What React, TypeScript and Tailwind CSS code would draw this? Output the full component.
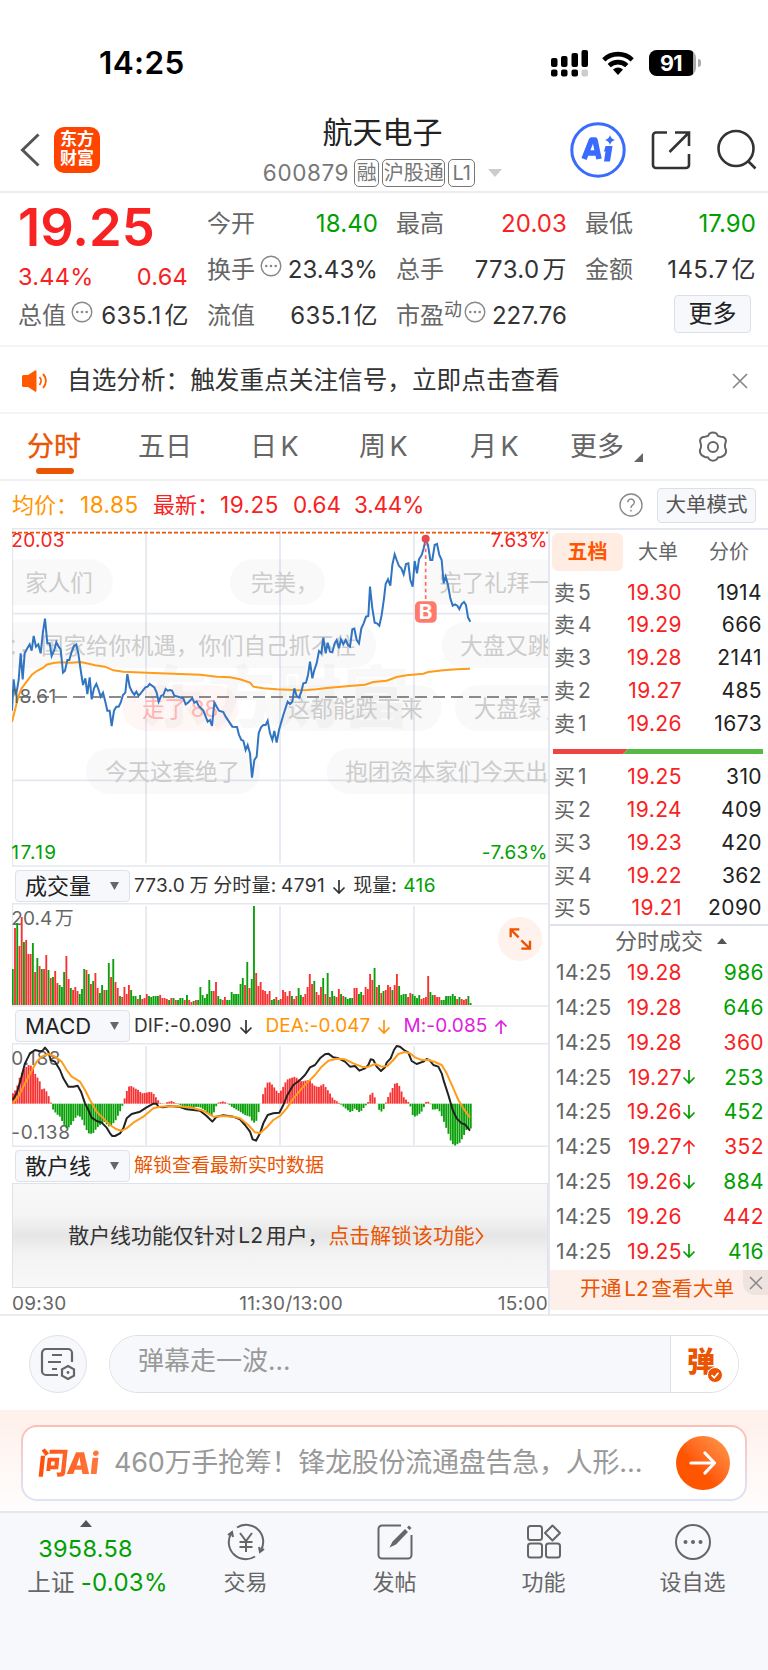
import React from 'react';
import { clsx } from 'clsx';

type Point = [number, number];

const parse = (s: string): Point[] =>
  s.trim().split(/\s+/).map((p) => p.split(',').map(Number) as Point);

// the second part of every series is stored relative to its own origin
const series = (first: string, second: string): Point[] => [
  ...parse(first),
  ...parse(second).map(([x, y]): Point => [x + 810, y]),
];

const toPoints = (pts: Point[]) => pts.map((p) => p.join(',')).join(' ');

const STEP = 6.7;
const GRID_X = [438, 840, 1242];

const PRICE = series(
  `36,572 41,478 46,520 51,510 56,480 62,400 68,478 74,400 82,385 89,373 95,392 101,348 108,380 115,373 122,400 129,335 135,296
  142,370 149,370 155,408 163,390 169,366 176,380 182,388 189,458 195,452 202,420 208,420 215,395 222,378 229,373 235,400 242,450
  249,495 256,475 262,522 269,472 275,538 282,505 289,492 296,510 302,530 309,518 316,545 322,572 329,572 335,618 342,572 349,560
  356,560 362,548 369,525 376,518 382,462 389,500 396,515 403,524 409,515 416,527 422,520 436,502 443,500 449,492 463,502 470,518
  476,545 483,528 490,525 497,507 503,512 510,510 516,512 523,527 537,531 550,535 557,553 564,548 577,535 583,548 590,545 596,558
  610,572 623,605 630,600 636,618 643,548 650,560 657,572 670,576 677,590 697,620 711,621 717,645 724,660 730,662 737,690 743,675
  750,700 756,773 763,720 770,710 776,640 783,622 790,615 797,615 803,602 810,640 817,660 823,633 830,668 837,630 850,585 863,545
  870,552 877,545`,
  `73,505 80,528 87,533 94,515 100,490 108,488 114,465 120,425 127,475 133,450 140,430 147,393 154,400 160,353 167,400 173,368
  180,395 187,397 194,370 200,360 207,385 213,358 220,373 227,360 234,375 240,380 247,328 253,326 260,360 267,370 274,325 281,310
  288,290 295,288 300,200 307,265 314,308 321,310 328,317 335,285 342,235 347,192 354,178 361,197 367,135 374,103 380,120 387,138
  394,145 401,163 408,132 415,130 421,180 428,200 434,123 441,160 447,118 455,105 461,85 467,58 474,75 481,120 487,120 494,75
  501,72 508,105 515,120 521,190 527,170 534,195 541,235 548,257 555,253 562,257 568,267 575,252 582,246 588,255 594,292 601,305`,
);

const AVERAGE = series(
  `36,605 45,570 55,530 65,505 80,485 95,465 110,453 130,443 140,434 160,429 180,427 215,428 240,426 260,430 285,436 315,440
  340,451 370,455 440,458 520,461 600,464 650,470 690,472 720,478 750,488 760,500 790,505 830,508 880,510`,
  `80,511 110,510 140,508 170,504 230,499 285,494 310,486 350,482 380,471 410,466 460,461 475,456 520,451 560,448 600,446`,
);

const DIF = series(
  `38,720 50,700 62,660 75,610 90,580 105,570 120,574 128,572 135,563 145,575 152,600 165,605 180,630 190,655 205,680 220,680
  233,677 243,695 255,730 265,750 275,773 290,783 305,788 320,803 330,820 337,828 345,828 360,820 370,805 380,775 395,762 420,755
  440,742 460,731 470,731 475,740 490,742 510,738 535,740 560,748 600,752 620,768 637,785 650,770 670,766 700,770 720,778 735,795
  750,815 758,838 768,842 780,820 790,790 803,765 820,760 838,758 850,735 862,705 880,675`,
  `90,660 105,645 120,622 135,615 150,595 165,583 175,581 190,592 205,595 225,605 240,620 255,618 268,632 285,625 295,615 302,598
  310,600 320,620 333,633 345,622 350,608 362,595 372,570 380,558 390,560 402,570 415,578 425,603 440,612 460,605 470,597 480,602
  490,615 505,620 515,640 522,665 535,705 548,750 560,775 575,790 585,793 600,812`,
);

const DEA = series(
  `38,730 55,710 75,670 95,632 110,605 125,590 145,582 165,590 185,605 200,630 215,650 240,665 255,690 270,720 290,755 310,775
  330,795 350,808 365,812 380,805 400,788 430,770 460,745 480,740 520,738 570,742 610,752 640,770 670,768 700,770 720,775 745,795
  765,817 780,820 800,802 820,780 840,768 860,745 880,715`,
  `90,692 100,680 115,665 135,645 155,620 175,602 200,596 225,598 250,610 275,620 290,622 315,612 335,620 352,618 370,600 385,582
  405,576 420,580 435,592 455,600 475,600 495,606 515,615 530,640 550,685 565,720 580,745 600,773`,
);

const HISTOGRAM = series(
  `40,700 50,685 60,650 70,630 85,615 97,618 105,640 120,665 125,688 135,685 145,705 152,725 160,750 170,762 180,770 190,790
  200,805 210,800 225,775 235,765 245,775 255,800 265,820 278,822 290,805 300,795 315,785 325,800 335,795 345,785 355,765 365,745
  372,722 380,695 385,680 395,678 405,685 415,690 425,700 440,698 452,695 460,700 470,715 480,728 490,733 500,727 515,723 525,728
  540,735 560,745 575,745 590,740 600,742 615,750 625,765 640,765 645,745 655,728 670,724 685,731 695,740 720,755 735,765 750,770
  760,790 770,782 775,760 782,735 787,710 795,685 805,663 815,672 825,685 835,700 845,690 860,660`,
  `55,657 75,650 85,657 95,665 105,662 120,660 130,675 145,682 160,672 170,685 180,700 190,718 203,725 215,735 230,748 243,758
  255,745 270,758 280,745 290,733 297,722 303,695 310,700 318,722 328,750 335,755 343,745 350,720 360,700 370,680 378,665 390,680
  400,710 415,726 422,740 430,772 445,765 455,755 465,735 470,722 480,728 490,752 500,745 510,755 520,780 535,820 545,850 555,857
  570,848 580,830 590,808 606,805`,
);

// height + direction for each minute
const VOLUME = `36g 77r 82g 59r 88r 63g 65r 51r 51r 62g 33r 47g 39r 36g 36r 50r 35g 27r 28g 34r 22r 20g 18g 33g 49r 26r 17g 15r 18r 14r
11g 16g 36g 35r 31g 21r 24g 32r 17r 12g 20g 15r 15g 42g 28r 46g 23r 17r 9g 8r 18r 11r 20r 15g 9g 9g 6r 10g 6r 7r
11r 9g 8g 9g 9g 9g 10r 7r 7r 6r 5g 7r 7g 5r 5g 7g 7g 5r 10g 5r 3r 4g 5r 5g 18g 10g 7g 11g 25g 14g
14r 23r 9g 6g 5r 8r 5g 5g 13g 11g 11g 11g 21g 27g 20r 43g 17r 26g 99g 32r 19r 23r 15r 14r 11r 14r 5g 6g 8r 5g
6r 15r 13r 9r 14r 9g 6r 9r 17g 10g 8r 11r 18r 31r 21r 24g 13r 10r 18r 27g 11r 32g 8r 14g 9g 8r 16r 11g 9r 8g
6g 7g 7g 17r 17r 11g 13g 10r 18r 16r 31r 25r 37g 18r 20g 12r 14g 15r 20r 18r 15g 20r 31r 19g 10g 11g 11g 8r 12r 11g
9g 7g 10g 6r 7r 8r 29r 13g 10g 10r 8r 8r 5g 5g 9g 9g 9g 11g 9g 6r 8g 6r 5r 6r 9g 2g`.split(/\s+/);

const valueAt = (pts: Point[], x: number) => {
  const i = pts.findIndex((p) => p[0] >= x);
  if (i === 0) return pts[0][1];
  if (i < 0) return pts[pts.length - 1][1];
  const [x0, y0] = pts[i - 1];
  const [x1, y1] = pts[i];
  return y0 + ((y1 - y0) * (x - x0)) / (x1 - x0);
};

const asks = [['卖 5', '19.30', '1914'], ['卖 4', '19.29', '666'], ['卖 3', '19.28', '2141'], ['卖 2', '19.27', '485'], ['卖 1', '19.26', '1673']];
const bids = [['买 1', '19.25', '310'], ['买 2', '19.24', '409'], ['买 3', '19.23', '420'], ['买 4', '19.22', '362'], ['买 5', '19.21', '2090']];

const trades = [
  { price: '19.28', dir: '', qty: '986', up: false },
  { price: '19.28', dir: '', qty: '646', up: false },
  { price: '19.28', dir: '', qty: '360', up: true },
  { price: '19.27', dir: 'down', qty: '253', up: false },
  { price: '19.26', dir: 'down', qty: '452', up: false },
  { price: '19.27', dir: 'up', qty: '352', up: true },
  { price: '19.26', dir: 'down', qty: '884', up: false },
  { price: '19.26', dir: '', qty: '442', up: true },
  { price: '19.25', dir: 'down', qty: '416', up: false },
];

const bullets = [
  { x: -20, w: 359, y: 118, tx: 76, text: '家人们' },
  { x: 690, w: 285, y: 118, tx: 753, text: '完美，' },
  { x: 1262, w: 500, y: 118, tx: 1318, text: '完了礼拜一' },
  { x: -20, w: 1149, y: 307, tx: 22, text: '：，国家给你机遇，你们自己抓不住' },
  { x: 1325, w: 500, y: 307, tx: 1381, text: '大盘又跳' },
  { x: 795, w: 530, y: 496, tx: 863, text: '这都能跌下来' },
  { x: 1365, w: 500, y: 496, tx: 1421, text: '大盘绿了' },
  { x: 258, w: 523, y: 685, tx: 315, text: '今天这套绝了' },
  { x: 980, w: 900, y: 685, tx: 1036, text: '抱团资本家们今天出' },
];

const Arrow = ({ up = false, className = '' }) => (
  <svg viewBox="0 0 14 16" className={clsx('h-4 w-3.5 shrink-0', up && 'rotate-180', className)} fill="none" stroke="currentColor" strokeWidth="1.7">
    <path d="M7 1v13M1.5 8.5 7 14l5.5-5.5" />
  </svg>
);

const Dots = () => (
  <svg viewBox="0 0 22 22" className="h-[22px] w-[22px] shrink-0" fill="none" stroke="#888" strokeWidth="1.4">
    <circle cx="11" cy="11" r="9.8" />
    <g fill="#888" stroke="none">
      <circle cx="6.3" cy="11" r="1.3" />
      <circle cx="11" cy="11" r="1.3" />
      <circle cx="15.7" cy="11" r="1.3" />
    </g>
  </svg>
);

const StatusBar = () => (
  <div className="flex h-[100px] items-center justify-between pt-[26px] pr-[67px] pl-[99px]">
    <span className="text-[31.5px] font-semibold tracking-[0.4px] text-black">14:25</span>
    <div className="flex items-center">
      <svg viewBox="0 0 38 27" className="h-[27px] w-[38px]">
        <rect x="0" y="8" width="6.5" height="9" rx="2" />
        <rect x="10" y="6" width="6.5" height="11" rx="2" />
        <rect x="20.5" y="3" width="6.5" height="14" rx="2" />
        <rect x="30.5" y="0" width="6.5" height="17" rx="2" />
        <rect x="0" y="19.5" width="6.5" height="7" rx="2" />
        <rect x="10" y="19.5" width="6.5" height="7" rx="2" />
        <rect x="20.5" y="19.5" width="6.5" height="7" rx="2" />
        <rect x="30.5" y="19.5" width="6.5" height="7" rx="2" fill="#ccc" />
      </svg>
      <svg viewBox="0 0 32 24" className="ml-[13px] h-6 w-8" fill="none" stroke="#000" strokeWidth="4.6">
        <path d="M1.8 8.8a20.5 20.5 0 0 1 28.4 0" />
        <path d="M7.2 14.6a13 13 0 0 1 17.6 0" />
        <path d="M11 18.5a8 8 0 0 1 10 0L16 24z" fill="#000" stroke="none" />
      </svg>
      <div className="ml-[15px] flex h-[26px] w-[47px] items-center overflow-hidden rounded-lg bg-[#aaa]">
        <span className="flex h-full w-[44px] items-center justify-center bg-black text-[21.5px] font-bold tracking-tight text-white">91</span>
      </div>
      <div className="ml-0.5 h-2 w-[3px] rounded-r-full bg-[#aaa]" />
    </div>
  </div>
);

const Header = () => (
  <div className="flex h-[93px] items-center border-b-2 border-[#ededed] pt-2 pl-5">
    <svg viewBox="0 0 20 34" className="h-[34px] w-5" fill="none" stroke="#555" strokeWidth="3">
      <path d="M18.5 1.5 2.5 17l16 15.5" />
    </svg>
    <div className="ml-3.5 flex h-[46px] w-[46px] flex-col items-center justify-center rounded-[10px] bg-[#ff4400] pb-0.5 text-[17px] leading-[19px] font-bold text-white">
      <span>东方</span>
      <span>财富</span>
    </div>
    <div className="ml-[162px] flex w-[241px] flex-col items-center">
      <span className="h-[47px] text-[30px] leading-[41px] text-[#222]">航天电子</span>
      <div className="flex h-7 items-center gap-[3px] text-xl text-[#777]">
        <span className="mr-0.5 text-[22.5px] tracking-[0.6px]">600879</span>
        <span className="flex h-7 w-[25px] items-center justify-center rounded-[5px] border-[1.5px] border-[#777]">融</span>
        <span className="flex h-7 w-[63px] items-center justify-center rounded-[5px] border-[1.5px] border-[#777]">沪股通</span>
        <span className="flex h-7 w-[27px] items-center justify-center rounded-[5px] border-[1.5px] border-[#777]">L1</span>
        <svg viewBox="0 0 14 8" className="ml-2.5 h-2 w-3.5" fill="#ccc"><path d="M0 0h14L7 8z" /></svg>
      </div>
    </div>
    <svg viewBox="0 0 56 56" className="ml-[67px] h-14 w-14 shrink-0">
      <circle cx="28" cy="28" r="26.2" fill="#fff" stroke="#3a6bff" strokeWidth="3" />
      <path d="M14 37 21.500 18h3.500l4 19M16 31h11" fill="none" stroke="#3a6bff" strokeWidth="5.500" strokeLinejoin="round" />
      <path d="M35.500 24h7l-2.500 15.500h-6l1.500-10h-1.500z" fill="#3a6bff" />
      <path d="M40 13q1 4 5 5-4 1-5 5-1-4-5-5 4-1 5-5z" fill="#3a6bff" />
    </svg>
    <svg viewBox="0 0 40 40" className="ml-[25px] h-10 w-10 shrink-0" fill="none" stroke="#333" strokeWidth="2.6">
      <path d="M16 2.5H5a3 3 0 0 0-3 3V35a3 3 0 0 0 3 3h30a3 3 0 0 0 3-3V24" />
      <path d="M24 2.5h14V16M37 3.5 18.5 22" />
    </svg>
    <svg viewBox="0 0 42 42" className="ml-[25px] h-[42px] w-[42px] shrink-0" fill="none" stroke="#333" strokeWidth="2.6">
      <circle cx="20" cy="19.5" r="17.5" />
      <path d="m32 32 7.5 7.5" />
    </svg>
  </div>
);

type QuoteProps = { label: string; value: string; unit?: string; tone?: string; extra?: React.ReactNode };

const Quote = ({ label, value, unit, tone = 'text-[#333]', extra }: QuoteProps) => (
  <div className="flex h-[46px] items-center justify-between">
    <div className="flex items-center text-2xl whitespace-nowrap text-[#666]">
      {label}
      {extra}
    </div>
    <span className={clsx('-mr-px text-[24px] whitespace-nowrap', unit ? 'tracking-[0.4px]' : 'tracking-[0.1px]', tone)}>
      {value}
      {unit && <span className="ml-[3px]">{unit}</span>}
    </span>
  </div>
);

const Quotes = () => (
  <div className="flex h-[154px] gap-[19px] border-b-2 border-[#f5f5f5] pt-2 pl-[18px]">
    <div className="w-[170px]">
      <div className="flex h-[52px] items-center text-[52.5px] font-semibold text-[#f82222]">19.25</div>
      <div className="flex h-10 items-center justify-between pt-[7px] text-[23.5px] tracking-[0.3px] text-[#f82222]">
        <span>3.44%</span>
        <span>0.64</span>
      </div>
      <Quote label="总值" value="635.1" unit="亿" extra={<span className="-mt-2 ml-[5px]"><Dots /></span>} />
    </div>
    <div className="w-[170px]">
      <Quote label="今开" value="18.40" tone="text-[#00a000]" />
      <Quote label="换手" value="23.43%" extra={<span className="-mt-2 ml-[5px]"><Dots /></span>} />
      <Quote label="流值" value="635.1" unit="亿" />
    </div>
    <div className="w-[170px]">
      <Quote label="最高" value="20.03" tone="text-[#f82222]" />
      <Quote label="总手" value="773.0" unit="万" />
      <Quote
        label="市盈"
        value="227.76"
        extra={<><span className="-mt-3 text-[18px]">动</span><span className="-mt-2 ml-0.5"><Dots /></span></>}
      />
    </div>
    <div className="w-[170px]">
      <Quote label="最低" value="17.90" tone="text-[#00a000]" />
      <Quote label="金额" value="145.7" unit="亿" />
      <div className="flex h-[46px] items-start justify-end pt-0.5 pr-1">
        <button className="h-[38px] w-[77px] rounded border-[1.5px] border-[#dcdfe6] bg-[#f7f8fb] text-2xl leading-none text-[#222]">更多</button>
      </div>
    </div>
  </div>
);

const Notice = () => (
  <div className="flex h-[67px] items-center border-b-2 border-[#f4f4f4] pt-0.5 pr-5 pl-[22px]">
    <svg viewBox="0 0 25 22" className="h-[22px] w-[25px]" fill="#ff5a00">
      <path d="M0 6.5Q0 5 1.5 5H6l7-4.6q1.5-.8 1.5 1v19.200q0 1.800-1.500 1L6 17H1.500Q0 17 0 15.500z" />
      <path d="M17.500 7a6 6 0 0 1 0 8M21 4a10 10 0 0 1 0 14" fill="none" stroke="#ff5a00" strokeWidth="1.8" />
    </svg>
    <span className="ml-5 text-[24.65px] whitespace-nowrap text-[#333]">自选分析：触发重点关注信号，立即点击查看</span>
    <svg viewBox="0 0 16 16" className="ml-auto h-4 w-4" stroke="#888" strokeWidth="1.7"><path d="m1 1 14 14M15 1 1 15" /></svg>
  </div>
);

const Tabs = () => (
  <div className="flex h-[67px] items-center border-b-2 border-[#f2f2f2] pt-0.5 text-[27px] whitespace-nowrap text-[#666] [word-spacing:-4px]">
    <div className="relative ml-[27px] w-[111px] text-[#ea5504] [-webkit-text-stroke:0.4px_#ea5504]">
      分时
      <div className="absolute -bottom-1.5 left-[9px] h-1.5 w-[38px] rounded-full bg-[#ea5504]" />
    </div>
    <div className="w-[112px]">五日</div>
    <div className="w-[109px]">日 K</div>
    <div className="w-[111px]">周 K</div>
    <div className="w-[100px]">月 K</div>
    <div className="flex w-[127px] items-end">
      更多
      <svg viewBox="0 0 9 9" className="mb-1.5 ml-2.5 h-[9px] w-[9px]" fill="#666"><path d="M9 0v9H0z" /></svg>
    </div>
    <svg viewBox="0 0 32 32" className="-mt-0.5 h-8 w-8" fill="none" stroke="#666" strokeWidth="2">
      <path d="M12.500 2.500q3.500-2 7 0l1.500 2.500 3 .8q4.500 0 5 4l-.8 3.200q-.8 3 .8 6 .8 5-5 7l-3 .5-1.500 2q-3.500 2.500-7 0L11 26.500l-3-.5q-5.800-2-5-7 1.600-3 .8-6L3 9.800q.5-4 5-4l3-.8z" />
      <circle cx="16" cy="16" r="5" />
    </svg>
  </div>
);

const AverageRow = () => (
  <div className="flex h-[47px] items-center pt-px pr-3 pl-3 text-[22px] whitespace-nowrap">
    <div className="w-[68px] text-[#ff9500]">均价：</div>
    <div className="w-[73px] text-[22.5px] tracking-[0.5px] text-[#ff9500]">18.85</div>
    <div className="w-[67px] text-[#f82222]">最新：</div>
    <div className="w-[73px] text-[22.5px] tracking-[0.5px] text-[#f82222]">19.25</div>
    <div className="w-[61px] text-[22.5px] text-[#f82222]">0.64</div>
    <div className="text-[22.5px] tracking-[-0.2px] text-[#f82222]">3.44%</div>
    <svg viewBox="0 0 24 24" className="ml-auto h-6 w-6" fill="none" stroke="#888" strokeWidth="1.4">
      <circle cx="12" cy="12" r="11" />
      <path d="M8.800 9.300a3.200 3.200 0 1 1 4.700 2.800q-1.500.9-1.500 2.900M12 16.800v1.800" />
    </svg>
    <button className="ml-3.5 flex h-[35px] w-[99px] items-center justify-center rounded border-[1.5px] border-[#dcdfe6] bg-[#f7f8fb] text-[20.500px] text-[#555]">大单模式</button>
  </div>
);

const PriceChart = () => (
  <svg viewBox="36 24 1608 1017" className="block h-[339px] w-[536px] shrink-0">
    <g stroke="#e4e7ee" strokeWidth="5">
      {GRID_X.map((x) => <path key={x} d={`M${x} 30V1030`} />)}
      <path d="M36 281H1647M36 781H1647" />
      <path d="M36 26H1647M36 1038H1647" />
      <path d="M37 24V1041" />
    </g>
    <text x="422" y="606" fontSize="202" fontWeight="900" fill="#000" opacity="0.025">东方财富</text>
    {bullets.map((b) => (
      <g key={b.text}>
        <rect x={b.x} y={b.y} width={b.w} height="137" rx="68" fill="#000" opacity="0.022" />
        <text x={b.tx} y={b.y + 95} fontSize="67.500" fill="#ccc">{b.text}</text>
      </g>
    ))}
    <rect x="368" y="496" width="347" height="137" rx="68" fill="#f00" opacity="0.035" />
    <text x="426" y="591" fontSize="67.500" fill="#ffb3b3" className="[word-spacing:-8px]">走了 88</text>
    <path d="M36 38H1647" stroke="#ea5504" strokeWidth="5" strokeDasharray="12 6" />
    <path d="M57 531H1647" stroke="#666" strokeWidth="5" strokeDasharray="36 18" />
    <polyline points={toPoints(AVERAGE)} fill="none" stroke="#ff9c1a" strokeWidth="6" />
    <polyline points={toPoints(PRICE)} fill="none" stroke="#3175c2" strokeWidth="6" />
    <path d="M1277 66V244" stroke="#ff6a5c" strokeWidth="5" strokeDasharray="11 9" />
    <circle cx="1277" cy="56" r="12" fill="#e8474f" />
    <rect x="1245" y="244" width="65" height="64" rx="14" fill="#ff7a6b" />
    <text x="1277" y="298" fontSize="62" fontWeight="700" textAnchor="middle" fill="#fff">B</text>
    <g fontSize="57" letterSpacing="1">
      <text x="34" y="82" fill="#f82222">20.03</text>
      <text x="1643" y="82" textAnchor="end" fill="#f82222">7.63%</text>
      <text x="34" y="549" fill="#666">18.61</text>
      <text x="34" y="1016" fill="#00a000" letterSpacing="4">17.19</text>
      <text x="1643" y="1016" textAnchor="end" fill="#00a000">-7.63%</text>
    </g>
  </svg>
);

const VolumeChart = () => (
  <svg viewBox="36 129 1608 312" className="block h-[104px] w-[536px] shrink-0">
    <g stroke="#e4e7ee" strokeWidth="5">
      {GRID_X.map((x) => <path key={x} d={`M${x} 138V434`} />)}
      <path d="M36 131H1647M36 438H1647M37 129V441" />
    </g>
    <text x="34" y="194" fontSize="57" fill="#666" className="[word-spacing:-8px]">20.4 万</text>
    {VOLUME.map((v, i) => {
      const h = parseInt(v, 10) * 3;
      return <rect key={i} x={35.500 + i * STEP} y={435 - h} width="5.600" height={h} fill={v.endsWith('r') ? '#f83232' : '#0aa00a'} />;
    })}
    <circle cx="1560" cy="237" r="66" fill="#fff1eb" />
    <path d="M1532 232V208H1558M1532 208l24 24M1590 242v24h-26M1590 266l-26-25" fill="none" stroke="#ea5504" strokeWidth="7" />
  </svg>
);

const MacdChart = () => (
  <svg viewBox="36 549 1608 312" className="block h-[104px] w-[536px] shrink-0">
    <g stroke="#e4e7ee" strokeWidth="5">
      {GRID_X.map((x) => <path key={x} d={`M${x} 558V856`} />)}
      <path d="M36 551H1647M36 859H1647M37 549V861" />
    </g>
    <g fontSize="57" fill="#666" letterSpacing="2">
      <text x="34" y="614">0.188</text>
      <text x="34" y="838">-0.138</text>
    </g>
    {Array.from({ length: 206 }, (_, i) => {
      const y = valueAt(HISTOGRAM, 39 + i * STEP);
      return <rect key={i} x={36 + i * STEP} y={Math.min(y, 731)} width="5.600" height={Math.abs(731 - y)} fill={y < 731 ? '#f83232' : '#0aa00a'} />;
    })}
    <polyline points={toPoints(DIF)} fill="none" stroke="#222" strokeWidth="6" strokeLinejoin="round" />
    <polyline points={toPoints(DEA)} fill="none" stroke="#ff9c1a" strokeWidth="6" strokeLinejoin="round" />
  </svg>
);

const Indicator = ({ name, children }: { name: string; children: React.ReactNode }) => (
  <div className="flex h-9 shrink-0 items-center pt-px pl-[3px] text-[19px] whitespace-nowrap text-[#333]">
    <button className="flex h-8 w-[115px] shrink-0 items-center justify-between rounded border-[1.500px] border-[#dfe1e8] bg-[#f7f8fb] pr-2.5 pl-[9px] text-[22px] leading-none text-[#222]">
      {name}
      <svg viewBox="0 0 9 8" className="h-2 w-[9px]" fill="#666"><path d="M0 0h9L4.500 8z" /></svg>
    </button>
    <div className="ml-1 flex items-center pt-0.5">{children}</div>
  </div>
);

const LevelRow = ({ row }: { row: string[] }) => (
  <div className="flex h-[32.750px] items-center pr-1.5 pl-1 text-[21px] whitespace-pre">
    <span className="w-[68px] text-[#666] [word-spacing:-3px]">{row[0]}</span>
    <span className="w-[60px] text-right tracking-[0.4px] text-[#f82222]">{row[1]}</span>
    <span className="flex-1 text-right tracking-[0.4px] text-[#222]">{row[2]}</span>
  </div>
);

const OrderBook = () => (
  <div className="flex h-[788px] w-[220px] flex-col border-l-2 border-[#e4e7ee]">
    <div className="flex h-[46px] shrink-0 items-center border-t-2 border-[#e4e7ee] pl-0.5 text-xl text-[#666]">
      <span className="flex h-[38px] w-[71px] items-center justify-center rounded-md bg-[#ffede4] font-bold text-[#ff5500]">五档</span>
      <span className="ml-[15px]">大单</span>
      <span className="ml-[31px]">分价</span>
    </div>
    <div className="pt-0.5">{asks.map((r) => <LevelRow key={r[0]} row={r} />)}</div>
    <svg viewBox="0 0 210 5" className="mt-[9px] ml-[3px] h-[5px] w-[210px] shrink-0">
      <path d="M0 0H75L70 5H0z" fill="#ee4444" />
      <path d="M75 0H210V5H70z" fill="#55b944" />
    </svg>
    <div className="pt-[7px] -mb-px">{bids.map((r) => <LevelRow key={r[0]} row={r} />)}</div>
    <div className="flex h-8 shrink-0 items-center border-t-2 border-[#dfe2ea] pl-[65px] text-[22px] leading-none text-[#666]">
      分时成交
      <svg viewBox="0 0 10 6" className="ml-3.5 h-1.5 w-2.5" fill="#555"><path d="M0 6h10L5 0z" /></svg>
    </div>
    {trades.map((t, i) => (
      <div key={i} className="flex h-[34.800px] shrink-0 items-center pr-1 pl-1.5 text-[21px]">
        <span className="w-[66px] tracking-[0.4px] text-[#666]">14:25</span>
        <span className="w-[60px] text-right tracking-[0.4px] text-[#f82222]">{t.price}</span>
        {t.dir && <Arrow up={t.dir === 'up'} className={t.dir === 'up' ? 'text-[#f82222]' : 'text-[#00a000]'} />}
        <span className={clsx('flex-1 text-right tracking-[0.4px]', t.up ? 'text-[#f82222]' : 'text-[#00a000]')}>{t.qty}</span>
      </div>
    ))}
    <div className="mt-auto mb-[6px] flex h-10 shrink-0 items-start justify-between bg-[#fdf0ea]">
      <span className="pl-[30px] text-[20.700px] leading-[37px] whitespace-nowrap text-[#ea5504] [word-spacing:-3px]">开通 L2 查看大单</span>
      <span className="flex h-[25px] w-[25px] shrink-0 items-center justify-center rounded-bl-xl bg-[#eee3de]">
        <svg viewBox="0 0 14 14" className="h-3.5 w-3.5" stroke="#888" strokeWidth="1.500"><path d="m1 1 12 12M13 1 1 13" /></svg>
      </span>
    </div>
  </div>
);

const Charts = () => (
  <div className="flex h-[788px] border-b-2 border-[#ededed]">
    <div className="ml-3 flex w-[536px] shrink-0 flex-col">
      <PriceChart />
      <Indicator name="成交量">
        <span className="tracking-[0.2px] [word-spacing:-1px]">773.0 万 分时量: <span className="tracking-[0.5px]">4791</span></span>
        <Arrow className="mx-[7px]" />
        <span>现量: <span className="ml-px tracking-[0.5px] text-[#00a000]">416</span></span>
      </Indicator>
      <VolumeChart />
      <Indicator name="MACD">
        <span className="tracking-[0.1px]">DIF:-0.090</span>
        <Arrow className="ml-[7px]" />
        <span className="ml-[13px] tracking-[0.1px] text-[#ff9500]">DEA:-0.047</span>
        <Arrow className="ml-[7px] text-[#ff9500]" />
        <span className="ml-3 tracking-[0.1px] text-[#e020e0]">M:-0.085</span>
        <Arrow up className="ml-[7px] text-[#e020e0]" />
      </Indicator>
      <MacdChart />
      <Indicator name="散户线">
        <span className="text-[#ea5504]">解锁查看最新实时数据</span>
      </Indicator>
      <div className="flex h-[105px] shrink-0 items-center justify-center border-[1.500px] border-[#e0e2e9] bg-[linear-gradient(180deg,#f8f8f8_0%,#f5f5f5_30%,#e6e6e6_50%,#f3f3f3_68%,#f8f8f8_100%)] pr-2 text-[20.900px] whitespace-nowrap text-[#333] [word-spacing:-3px]">
        散户线功能仅针对 L2 用户，<span className="text-[#ea5504]">点击解锁该功能</span>
        <svg viewBox="0 0 9 18" className="h-[18px] w-[9px]" fill="none" stroke="#ea5504" strokeWidth="1.700"><path d="m1 1 6.500 8L1 17" /></svg>
      </div>
      <div className="flex flex-1 items-center justify-between pt-1 text-[19px] leading-none tracking-[0.3px] text-[#666]">
        <span>09:30</span>
        <span className="pl-[18px]">11:30/13:00</span>
        <span>15:00</span>
      </div>
    </div>
    <OrderBook />
  </div>
);

const CommentBar = () => (
  <div className="flex h-[94px] items-center pt-px pl-[29px]">
    <div className="flex h-[58px] w-[58px] items-center justify-center rounded-full border-[1.500px] border-[#dfe1e8] bg-[#f7f8fb]">
      <svg viewBox="0 0 36 34" className="h-[34px] w-9" fill="none" stroke="#666" strokeWidth="2.200">
        <path d="M32 15V6a4 4 0 0 0-4-4H6a4 4 0 0 0-4 4v18a4 4 0 0 0 4 4h12M12 8h10M8 15h13M12 22h5" />
        <path d="m28 19 6 3.300v6.400L28 32l-6-3.300v-6.400z" />
        <circle cx="28" cy="25.500" r="1.400" fill="#666" stroke="none" />
      </svg>
    </div>
    <div className="ml-[22px] flex h-[58px] w-[630px] overflow-hidden rounded-full border-[1.500px] border-[#dcdfe6]">
      <div className="flex w-[561px] items-center border-r-[1.500px] border-[#dcdfe6] bg-[#f7f8fb] pb-1.5 pl-7 text-[26px] text-[#999]">弹幕走一波...</div>
      <div className="relative flex-1 bg-white">
        <span className="absolute top-1.5 left-4 text-[28px] leading-10 font-black text-[#ea5504]">弹</span>
        <svg viewBox="0 0 16 16" className="absolute top-[31px] left-[36px] h-4 w-4">
          <circle cx="8" cy="8" r="7.500" fill="#ea5504" stroke="#fff" />
          <path d="m4.500 8 2.700 2.700 4.300-5" fill="none" stroke="#fff" strokeWidth="1.700" />
        </svg>
      </div>
    </div>
  </div>
);

const AskBar = () => (
  <div className="h-[101px] bg-linear-to-b from-[#fff0eb] to-[#fefdfd] pt-[15px] pl-[21px]">
    <div className="h-[76px] w-[726px] rounded-2xl bg-linear-to-b from-[#ffbdb3] to-[#dbe5f8] p-0.5">
      <div className="flex h-full items-center rounded-[14px] bg-white pr-[15px] pl-3.5">
        <div className="flex w-[66px] -skew-x-6 items-center bg-linear-to-r from-[#ff4d00] to-[#ff7a40] bg-clip-text pl-px text-[30px] font-black tracking-[-0.800px] text-transparent">问Ai</div>
        <span className="ml-[11px] text-[27px] tracking-[-0.250px] whitespace-nowrap text-[#999]">460万手抢筹！锋龙股份流通盘告急，人形…</span>
        <div className="ml-auto flex h-[54px] w-[54px] shrink-0 items-center justify-center rounded-full bg-linear-to-tr from-[#ff5500] from-40% to-[#ff9a4a]">
          <svg viewBox="0 0 28 24" className="h-6 w-7" fill="none" stroke="#fff" strokeWidth="3.200" strokeLinecap="round" strokeLinejoin="round"><path d="M2 12h23M16 2l9.500 10L16 22" /></svg>
        </div>
      </div>
    </div>
  </div>
);

const navItems = [
  {
    label: '交易',
    icon: (
      <>
        <path d="M11 5.500A17 17 0 0 1 34.500 29M38 27l-4 3-1-5M29 34.500A17 17 0 0 1 5.500 11M2 13l4-3 1 5" />
        <path d="m14 11 6 8 6-8M20 19v11M13.500 20h13M13.500 25h13" />
      </>
    ),
  },
  {
    label: '发帖',
    icon: (
      <>
        <path d="M26 3.500H7a3.500 3.500 0 0 0-3.500 3.500v26A3.500 3.500 0 0 0 7 36.500h26a3.500 3.500 0 0 0 3.500-3.500V13" />
        <path d="m14.500 25.500 3-6L30 7l3 3-12 12.500zM32 5.500l2-2 2.500 2.500-2 2z" fill="#666" stroke="none" />
      </>
    ),
  },
  {
    label: '功能',
    icon: (
      <>
        <rect x="4" y="4" width="14" height="14" rx="2.500" />
        <rect x="4" y="21.500" width="14" height="14" rx="2.500" />
        <rect x="22" y="21.500" width="14" height="14" rx="2.500" />
        <path d="m28.500 3.500 7.500 7.500-7.500 7.500-7.500-7.500z" strokeLinejoin="round" />
      </>
    ),
  },
  {
    label: '设自选',
    icon: (
      <>
        <circle cx="20" cy="20" r="17" />
        <g fill="#666" stroke="none"><circle cx="12.500" cy="20" r="2" /><circle cx="20" cy="20" r="2" /><circle cx="27.500" cy="20" r="2" /></g>
      </>
    ),
  },
];

const BottomNav = () => (
  <div className="flex h-[159px] border-t-2 border-[#e6e7ea] bg-[#f7f8fb] text-[22px] text-[#666]">
    <div className="flex w-[171px] flex-col items-center pt-[7px] text-[23.500px] tracking-[0.300px]">
      <svg viewBox="0 0 12 7" className="h-[7px] w-3" fill="#555"><path d="M0 7h12L6 0z" /></svg>
      <span className="mt-1 leading-[35px] text-[#00a000]">3958.58</span>
      <span className="pl-6 leading-[33px] whitespace-nowrap [word-spacing:-1px]">上证 <span className="text-[24px] text-[#00a000]">-0.03%</span></span>
    </div>
    {navItems.map((n) => (
      <div key={n.label} className="flex w-[149px] flex-col items-center pt-[9px]">
        <svg viewBox="0 0 40 40" className="h-10 w-10" fill="none" stroke="#666" strokeWidth="2">{n.icon}</svg>
        <span className="mt-1 leading-8">{n.label}</span>
      </div>
    ))}
  </div>
);

export default function App() {
  return (
    <div className="h-[1670px] w-[768px] overflow-hidden bg-white font-['Inter','Noto_Sans_CJK_SC',sans-serif]">
      <StatusBar />
      <Header />
      <Quotes />
      <Notice />
      <Tabs />
      <AverageRow />
      <Charts />
      <CommentBar />
      <AskBar />
      <BottomNav />
    </div>
  );
}
